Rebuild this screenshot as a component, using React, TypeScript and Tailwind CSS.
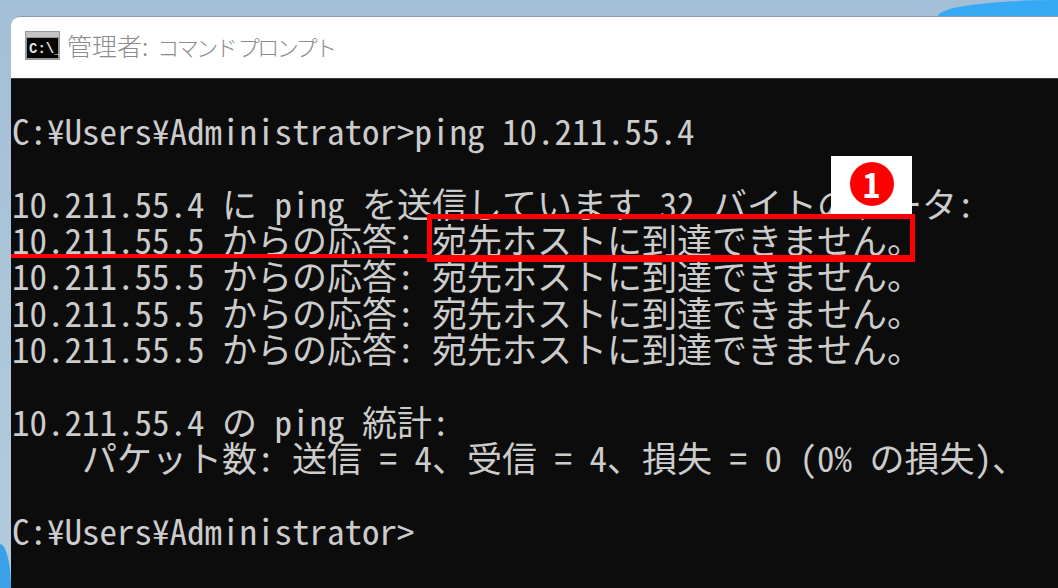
const lines = [
  '',
  'C:¥Users¥Administrator>ping 10.211.55.4',
  '',
  '10.211.55.4 に ping を送信しています 32 バイトのデータ:',
  '10.211.55.5 からの応答: 宛先ホストに到達できません。',
  '10.211.55.5 からの応答: 宛先ホストに到達できません。',
  '10.211.55.5 からの応答: 宛先ホストに到達できません。',
  '10.211.55.5 からの応答: 宛先ホストに到達できません。',
  '',
  '10.211.55.4 の ping 統計:',
  '    パケット数: 送信 = 4、受信 = 4、損失 = 0 (0% の損失)、',
  '',
  'C:¥Users¥Administrator>',
];

function CmdIcon() {
  return (
    <svg width="35" height="29" viewBox="0 0 35 29" className="shrink-0">
      <rect width="35" height="29" fill="#9a9a9a" />
      <rect x="1" y="1" width="33" height="5" fill="#c4c4c4" />
      <rect x="2" y="7" width="31" height="20" fill="#050505" />
      <text x="4" y="22" fontSize="14" fontWeight="700" fill="#e4e4e4" fontFamily="Liberation Mono, monospace">
        C:\_
      </text>
    </svg>
  );
}

export default function App() {
  return (
    <div className="relative h-[588px] w-[1058px] overflow-hidden bg-gradient-to-b from-[#a3bfd6] to-[#b4cbdc] pl-[11px] pt-4">
      <div className="absolute right-0 top-0 h-4 w-[120px] rounded-tl-[100%] bg-[#36a9f5]" />
      <div className="absolute bottom-0 left-0 h-[44px] w-[11px] rounded-tr-[100%] bg-[#3aa0e8]" />
      <div className="relative h-full overflow-hidden rounded-tl-[9px] border-t border-[#8f9ba6] bg-white">
        <div className="flex h-[61px] items-center gap-[7px] pb-[4px] pl-[14px] font-['Noto_Sans_CJK_JP',sans-serif] font-light text-[#8c8c8c]">
          <CmdIcon />
          <span className="whitespace-pre text-[25px] leading-[36px]">
            管理者:
            <span className="ml-[9px] text-[22px] tracking-[-2.5px]">コマンド プロンプト</span>
          </span>
        </div>
        <div className="h-full border-t border-[#3a3a3a] bg-[#0c0c0c] pl-[1px] font-['Noto_Sans_Mono_CJK_JP','Noto_Sans_CJK_JP',monospace] text-[35px] font-light text-[#cccccc]">
          {lines.map((line, i) => (
            <div key={i} className="h-[36.3px] whitespace-pre leading-[29.3px]">
              {line}
            </div>
          ))}
        </div>
      </div>
      <div className="absolute left-[11px] top-[254px] h-[4px] w-[418px] bg-[#ff0000]" />
      <div className="absolute left-[427px] top-[214px] h-[48px] w-[488px] border-[5px] border-b-[7px] border-[#ff0000]" />
      <div className="absolute left-[831px] top-[156px] flex h-[58px] w-[81px] items-center justify-center bg-white pb-[2px]">
        <span className="flex h-[44px] w-[44px] items-center justify-center rounded-full bg-[#ff0000] font-['Noto_Sans_Mono_CJK_JP','Noto_Sans_CJK_JP',sans-serif] text-[34px] font-bold leading-none text-white">
          1
        </span>
      </div>
    </div>
  );
}
